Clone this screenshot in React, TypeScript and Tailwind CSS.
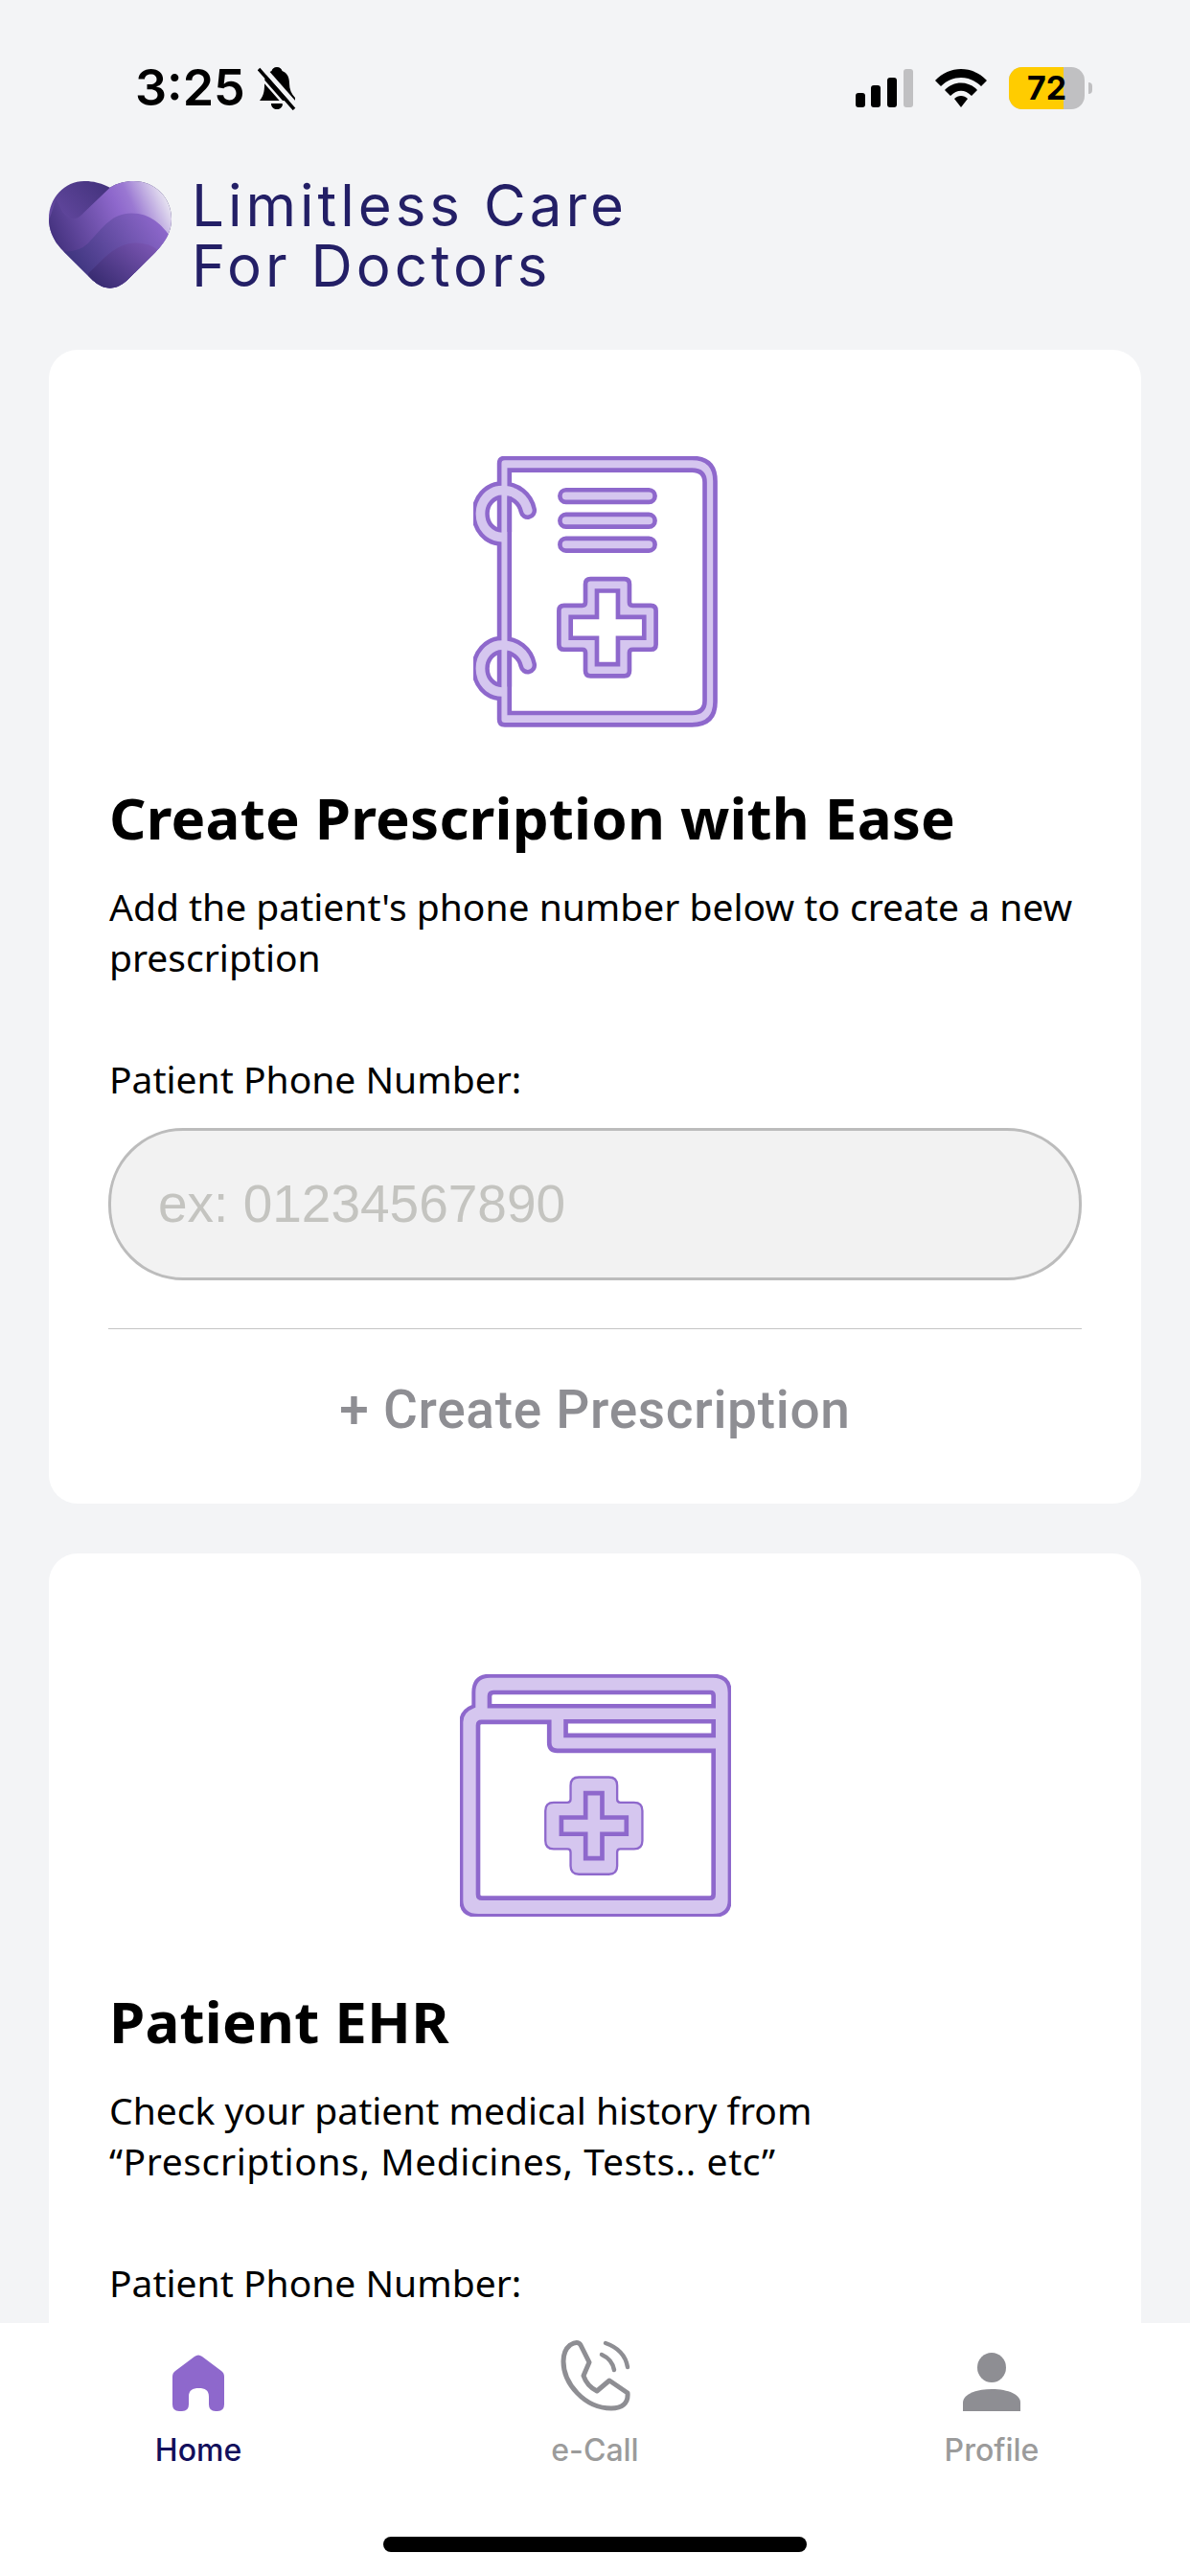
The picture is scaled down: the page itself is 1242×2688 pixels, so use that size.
const OUT = "#8e68cc";
const FILL = "#d5c6ef";

function cross(c: number, d: number, a: number, b: number, r: number) {
  const i = Math.min(r, 10);
  return [
    `M${c - a + r} ${d - b}H${c + a - r}Q${c + a} ${d - b} ${c + a} ${d - b + r}`,
    `V${d - a - i}Q${c + a} ${d - a} ${c + a + i} ${d - a}H${c + b - r}Q${c + b} ${d - a} ${c + b} ${d - a + r}`,
    `V${d + a - r}Q${c + b} ${d + a} ${c + b - r} ${d + a}H${c + a + i}Q${c + a} ${d + a} ${c + a} ${d + a + i}`,
    `V${d + b - r}Q${c + a} ${d + b} ${c + a - r} ${d + b}H${c - a + r}Q${c - a} ${d + b} ${c - a} ${d + b - r}`,
    `V${d + a + i}Q${c - a} ${d + a} ${c - a - i} ${d + a}H${c - b + r}Q${c - b} ${d + a} ${c - b} ${d + a - r}`,
    `V${d - a + r}Q${c - b} ${d - a} ${c - b + r} ${d - a}H${c - a - i}Q${c - a} ${d - a} ${c - a} ${d - a - i}`,
    `V${d - b + r}Q${c - a} ${d - b} ${c - a + r} ${d - b}Z`,
  ].join("");
}

const RING = "M270 248C262 210 230 185 190 185C150 185 122 220 122 258C122 298 150 332 190 332";

function BookIcon() {
  return (
    <svg width="255" height="283" viewBox="100 78 765 850" className="block">
      {[0, 485].map((y) => (
        <path key={y} d={RING} transform={`translate(0 ${y})`} fill="none" stroke={OUT} strokeWidth="56" strokeLinecap="round" />
      ))}
      <path
        d="M198 84H785Q858 84 858 157V848Q858 920 785 920H198Q181 920 181 903V101Q181 84 198 84ZM213 122V883H785Q825 883 825 845V160Q825 122 785 122Z"
        fill={FILL}
        stroke={OUT}
        strokeWidth="14"
        fillRule="evenodd"
      />
      {[0, 485].map((y) => (
        <path key={y} d={RING} transform={`translate(0 ${y})`} fill="none" stroke={FILL} strokeWidth="29" strokeLinecap="round" />
      ))}
      <path d="M213 205V315M213 690V800" stroke={OUT} strokeWidth="14" />
      {[184, 261, 336].map((y) => (
        <rect key={y} x="371" y={y} width="298" height="38" rx="19" fill={FILL} stroke={OUT} strokeWidth="14" />
      ))}
      <path d={cross(520, 615, 69, 152, 16)} fill={FILL} stroke={OUT} strokeWidth="14" />
      <path d={cross(520, 615, 33, 115, 0)} fill="#fff" stroke={OUT} strokeWidth="14" />
    </svg>
  );
}

function FolderIcon() {
  return (
    <svg width="283" height="253" viewBox="60 55 850 760" className="block">
      <path
        d="M103 155V112Q103 60 155 60H853Q906 60 906 112V763Q906 812 853 812H118Q64 812 64 763V205Q64 170 103 155Z"
        fill={FILL}
        stroke={OUT}
        strokeWidth="12"
      />
      <path d="M165 112H845Q855 112 855 122V155H153V124Q153 112 165 112Z" fill="#fff" stroke={OUT} strokeWidth="14" />
      <path d="M392 203H855V247H392Z" fill="#fff" stroke={OUT} strokeWidth="14" />
      <path
        d="M128 205H340V270Q340 295 365 295H855V745Q855 757 843 757H129Q117 757 117 745V216Q117 205 128 205Z"
        fill="#fff"
        stroke={OUT}
        strokeWidth="14"
      />
      <path d={cross(480, 530, 73, 152, 26)} fill={FILL} stroke={OUT} strokeWidth="7" />
      <path d={cross(480, 530, 26, 102, 0)} fill={FILL} stroke={OUT} strokeWidth="14" />
    </svg>
  );
}

function Logo() {
  const heart =
    "M255 468C225 448 205 448 195 448C150 448 113 500 113 565C113 610 130 645 150 670L215 757Q255 805 295 757L360 670C385 635 398 605 398 565C398 500 360 448 310 448C290 448 270 455 255 468Z";
  return (
    <svg width="128" height="113" viewBox="113 448 285 337" preserveAspectRatio="none" className="block shrink-0">
      <defs>
        <clipPath id="hc">
          <path d={heart} />
        </clipPath>
        <linearGradient id="g1" x1="0.9" y1="0" x2="0.1" y2="0.7">
          <stop offset="0" stopColor="#2f2566" />
          <stop offset="1" stopColor="#6f50ad" />
        </linearGradient>
        <linearGradient id="g2" x1="0" y1="0.65" x2="1" y2="0.25">
          <stop offset="0" stopColor="#35276f" />
          <stop offset="0.62" stopColor="#8e68cc" />
          <stop offset="0.72" stopColor="#9a78d2" />
          <stop offset="1" stopColor="#f3f4f6" />
        </linearGradient>
        <linearGradient id="g3" x1="0" y1="0.8" x2="1" y2="0.3">
          <stop offset="0" stopColor="#2d2a6e" />
          <stop offset="1" stopColor="#8e68cc" />
        </linearGradient>
        <linearGradient id="g4" x1="0" y1="0.9" x2="1" y2="0">
          <stop offset="0" stopColor="#2f2668" />
          <stop offset="1" stopColor="#8059b8" />
        </linearGradient>
      </defs>
      <g clipPath="url(#hc)">
        <rect x="113" y="448" width="285" height="337" fill="url(#g1)" />
        <path d="M255 468L195 545Q170 585 145 545L130 505L100 620V800H410V440H270Z" fill="url(#g2)" />
        <path d="M130 665Q180 675 205 640C240 590 260 548 305 548C350 548 375 585 392 615L400 800H130Z" fill="url(#g3)" />
        <path d="M205 735C240 690 270 640 315 640C340 640 355 650 365 662L300 800H205Z" fill="url(#g4)" />
      </g>
    </svg>
  );
}

function StatusBar() {
  return (
    <div className="h-[184px] flex items-center justify-between pl-[141px] pr-[102px] shrink-0">
      <div className="flex items-center gap-[13px]">
        <span className="text-[52px] leading-none font-semibold text-black font-['Inter',sans-serif]">3:25</span>
        <svg width="40" height="46" viewBox="0 0 40 46" className="block">
          <path d="M20 1C23 1 25 3 25.500 5C31 7 33 12 33 18C33 24 35 29 39 33V36H2C7 30 7 24 7 18C7 12 9 7 14.500 5C15 3 17 1 20 1Z" fill="#000" />
          <path d="M14 39H26C26 43 23 45 20 45C17 45 14 43 14 39Z" fill="#000" />
          <path d="M4 0L42 43" stroke="#f3f4f6" strokeWidth="5" />
          <path d="M1 3L38 45" stroke="#000" strokeWidth="3.500" />
          <path d="M-2 6L34 47" stroke="#f3f4f6" strokeWidth="2.500" />
        </svg>
      </div>
      <div className="flex items-center">
        <svg width="60" height="40" viewBox="0 0 60 40" className="block">
          <rect x="0" y="25" width="10" height="15" rx="3" fill="#000" />
          <rect x="16" y="17" width="10" height="23" rx="3" fill="#000" />
          <rect x="33" y="9" width="10" height="31" rx="3" fill="#000" />
          <rect x="50" y="0" width="10" height="40" rx="3" fill="#c0c0c2" />
        </svg>
        <svg width="54" height="40" viewBox="0 0 54 40" className="block ml-[23px]">
          <path d="M0 12C15 -4 39 -4 54 12L48 18C36 6 18 6 6 18Z" fill="#000" />
          <path d="M10 22C19 12 35 12 44 22L38 28C31 21 23 21 16 28Z" fill="#000" />
          <path d="M20 31C24 27 30 27 34 31L27 40Z" fill="#000" />
        </svg>
        <div className="ml-[23px] relative w-[79px] h-[44px] rounded-[14px] bg-[#c0c0c2] overflow-hidden">
          <div className="h-full w-[72%] bg-[#ffcc00]" />
          <span className="absolute inset-0 flex items-center justify-center text-[34px] leading-none font-bold text-black font-['Inter',sans-serif]">72</span>
        </div>
        <div className="ml-[4px] w-[4px] h-[12px] rounded-r-full bg-[#c0c0c2]" />
      </div>
    </div>
  );
}

const bodyFont = "font-['Noto_Sans',sans-serif]";

function Card(props: { icon: React.ReactNode; iconClass: string; headClass: string; title: string; lines: { text: string; cls: string }[] }) {
  return (
    <section className="bg-white rounded-[30px] px-[63px] pb-[14px] w-[1140px] shrink-0">
      <div className={`flex justify-center ${props.iconClass}`}>{props.icon}</div>
      <h2 className={`${props.headClass} text-[60px] leading-[72px] tracking-[0.2px] font-bold text-black ${bodyFont}`}>{props.title}</h2>
      <p className={`mt-[30px] text-[39px] leading-[53px] text-black ${bodyFont}`}>
        {props.lines.map((l) => (
          <span key={l.text} className={`block ${l.cls}`}>{l.text}</span>
        ))}
      </p>
      <label className={`block mt-[74px] text-[39px] leading-[53px] text-black ${bodyFont}`}>Patient Phone Number:</label>
      <div className="mt-[25px] h-[159px] -mx-[1px] rounded-[78px] bg-[#f2f2f2] border-[3px] border-[#bcbcbc] flex items-center pl-[49px]">
        <span className="text-[55px] leading-none text-[#c4c4c0] font-['Liberation_Sans',sans-serif]">ex: 01234567890</span>
      </div>
      <div className="mt-[50px] -mx-[1px] h-[1px] bg-[#c4c4c4]" />
      <div className="h-[168px] flex items-center justify-center text-[55px] tracking-[0.7px] leading-none font-medium text-[#8e8e93] font-['Roboto',sans-serif]">
        + Create Prescription
      </div>
    </section>
  );
}

function NavItem(props: { icon: React.ReactNode; label: string; labelClass: string }) {
  return (
    <div className="flex flex-col items-center">
      <div className="h-[82px] flex items-end justify-center">{props.icon}</div>
      <span className={`mt-[22px] text-[32px] leading-[38px] font-medium font-['Inter',sans-serif] ${props.labelClass}`}>{props.label}</span>
    </div>
  );
}

export default function App() {
  return (
    <div className="w-[1242px] h-[2688px] bg-[#f3f4f6] flex flex-col overflow-hidden">
      <StatusBar />
      <header className="flex items-start gap-[21px] pl-[51px] pt-[5px] pb-[56px] shrink-0">
        <Logo />
        <div className="-mt-[6px] text-[60px] leading-[63px] font-normal tracking-[4px] text-[#231f66] font-['Inter',sans-serif]">
          <div>Limitless Care</div>
          <div>For Doctors</div>
        </div>
      </header>
      <main className="flex-1 min-h-0 overflow-hidden flex flex-col items-center gap-[52px]">
        <Card
          icon={<BookIcon />}
          iconClass="pt-[111px]"
          headClass="mt-[58px]"
          title="Create Prescription with Ease"
          lines={[
            { text: "Add the patient's phone number below to create a new", cls: "" },
            { text: "prescription", cls: "" },
          ]}
        />
        <Card
          icon={<FolderIcon />}
          iconClass="pt-[126px]"
          headClass="mt-[73px]"
          title="Patient EHR"
          lines={[
            { text: "Check your patient medical history from", cls: "" },
            { text: "“Prescriptions, Medicines, Tests.. etc”", cls: "tracking-[0.6px]" },
          ]}
        />
      </main>
      <nav className="h-[264px] bg-white shrink-0 flex flex-col">
        <div className="grid grid-cols-3 pt-[10px]">
          <NavItem
            label="Home"
            labelClass="text-[#120f5c]"
            icon={
              <svg width="54" height="59" viewBox="0 0 54 59" className="block">
                <path d="M23 2Q27 -1 31 2L51 17Q54 19 54 23V52Q54 59 47 59H45Q38 59 38 52V44C38 37 34 35 27.500 35C21 35 17 37 17 44V52Q17 59 10 59H7Q0 59 0 52V23Q0 19 3 17Z" fill="#8e68cc" />
              </svg>
            }
          />
          <NavItem
            label="e-Call"
            labelClass="text-[#9b9b9b]"
            icon={
              <svg width="73" height="74" viewBox="0 0 73 74" fill="none" stroke="#8e8e93" strokeLinecap="round" strokeLinejoin="round" className="block">
                <path d="M10 5Q18 0 21 5L30 23L24 37C27 46 32 50 38 53L51 42L70 55C71 66 64 71 53 71C25 71 3 45 3 22C3 15 5 9 10 5Z" strokeWidth="5" />
                <path d="M43 15Q54 20 56 31" strokeWidth="4.500" />
                <path d="M47 3Q67 10 70 28" strokeWidth="4.500" />
              </svg>
            }
          />
          <NavItem
            label="Profile"
            labelClass="text-[#9b9b9b]"
            icon={
              <svg width="60" height="61" viewBox="0 0 60 61" className="block">
                <ellipse cx="30" cy="15.500" rx="15" ry="15.500" fill="#8e8e93" />
                <path d="M0 61V52C0 44 12 38 30 38C48 38 60 44 60 52V61Z" fill="#8e8e93" />
              </svg>
            }
          />
        </div>
        <div className="mt-auto mb-[25px] self-center w-[442px] h-[16px] rounded-full bg-black" />
      </nav>
    </div>
  );
}
